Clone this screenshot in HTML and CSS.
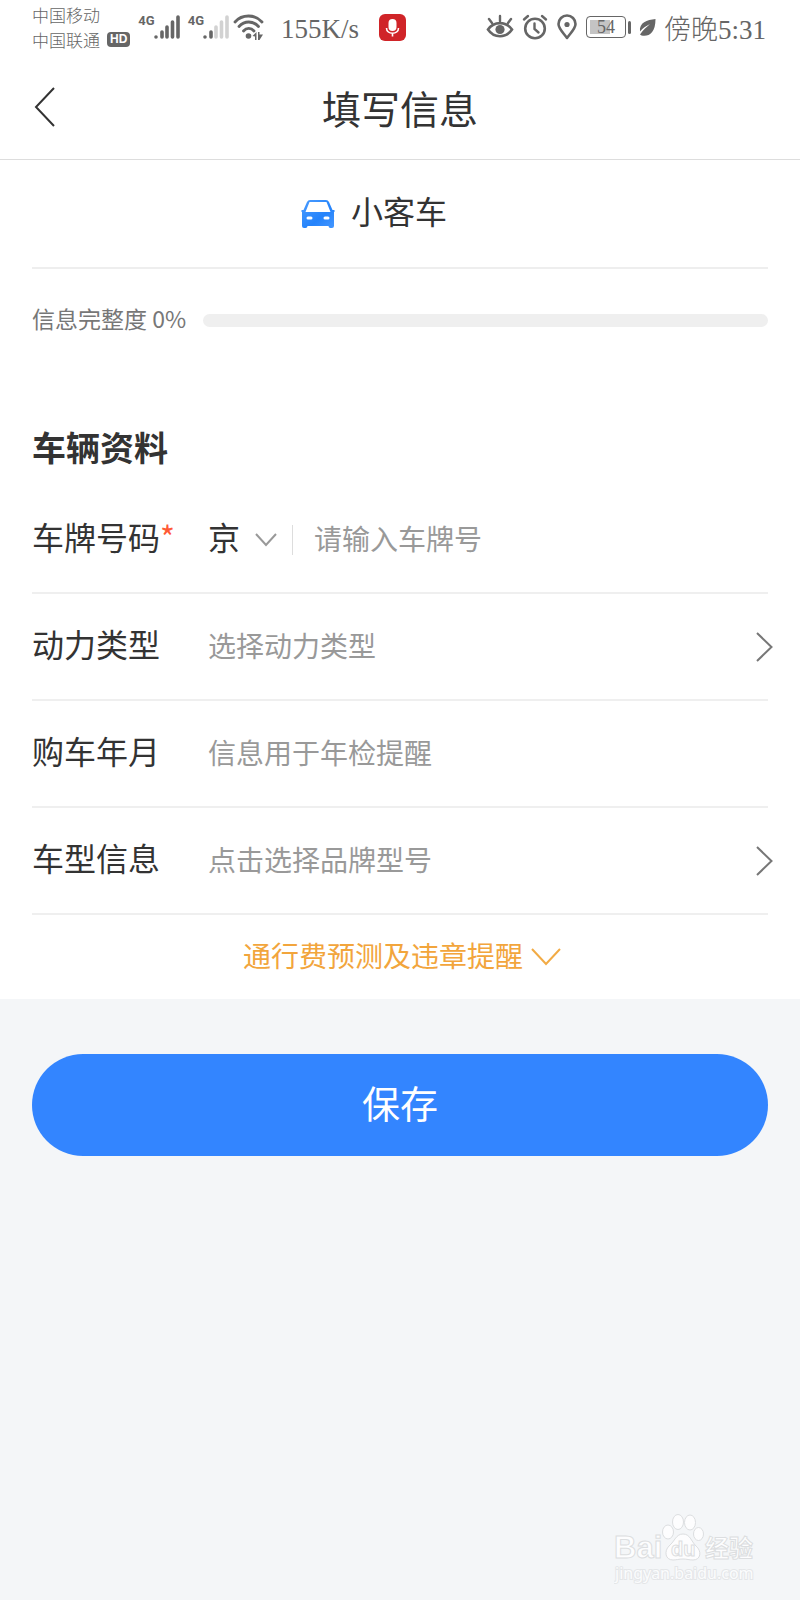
FILE: index.html
```html
<!DOCTYPE html>
<html lang="zh-CN">
<head>
    <meta charset="UTF-8">
    <meta name="viewport" content="width=device-width, initial-scale=1.0">
    <title>填写信息</title>
    <link rel="stylesheet" href="styles.css">
</head>
<body>
    <div class="status-bar">
        <div class="carriers">
            <div>中国移动</div>
            <div class="carrier-line">中国联通 <span class="hd">HD</span></div>
        </div>
        <div class="signal">
            <span class="net">4G</span>
            <svg width="27" height="26" viewBox="0 0 27 26" stroke-width="3.600" stroke-linecap="round">
                <path d="M3 23v0M9 18v5M14 13v10M19.500 8v15M25 3v20" stroke="#666"/>
            </svg>
        </div>
        <div class="signal">
            <span class="net">4G</span>
            <svg width="27" height="26" viewBox="0 0 27 26" stroke-width="3.600" stroke-linecap="round">
                <path d="M3 23v0M9 18v5" stroke="#666"/>
                <path d="M14 13v10M19.500 8v15M25 3v20" stroke="#d2d2d2"/>
            </svg>
        </div>
        <svg class="wifi" width="32" height="26" viewBox="0 0 32 26" fill="none" stroke="#666" stroke-width="2.800" stroke-linecap="round">
            <path d="M2 8C9 0 22 0 29 8M6 12.500C11.500 6.500 20 6.500 25.500 12.500M10.500 17c3-3.500 7.500-3.500 10.500 0"/>
            <circle cx="15.500" cy="22" r="2.800" fill="#666" stroke="none"/>
            <path d="M19.500 22l4-4v8h-1.500v-3.500zM25 18h1.500v2.500h3.500l-3.500 5.500h-1.500z" fill="#666" stroke="none"/>
        </svg>
        <span class="speed">155K/s</span>
        <svg class="mic" width="27" height="27" viewBox="0 0 27 27">
            <rect width="27" height="27" rx="6" fill="#d02428"/>
            <rect x="9.500" y="5" width="8" height="12" rx="4" fill="#fff"/>
            <path d="M7.500 14c0 7 12 7 12 0M13.500 19v3.500" fill="none" stroke="#fff" stroke-width="1.600"/>
        </svg>
        <div class="status-right">
            <svg width="28" height="26" viewBox="0 0 28 26" fill="none" stroke="#666" stroke-width="2.600" stroke-linecap="round">
                <path d="M2 15.500C8 7 20 7 26 15.500 20 24.500 8 24.500 2 15.500z"/>
                <circle cx="14" cy="15.500" r="4.600" fill="#666" stroke="none"/>
                <path d="M14 2v5M3 5l3 4M25 5l-3 4" stroke-width="2.400"/>
            </svg>
            <svg width="26" height="26" viewBox="0 0 26 26" fill="none" stroke="#666" stroke-width="2.600" stroke-linecap="round">
                <circle cx="13" cy="14.500" r="9.800"/>
                <path d="M12.500 9.500v5.500l4 3.500M2 5.500l4-3.500M24 5.500l-4-3.500" stroke-width="2.400"/>
            </svg>
            <svg width="22" height="26" viewBox="0 0 22 26" fill="none" stroke="#666" stroke-width="2.600" stroke-linejoin="round">
                <path d="M11 24C7 18.500 2.500 14.500 2.500 10a8.500 8.500 0 0 1 17 0c0 4.500-4.500 8.500-8.500 14z"/>
                <circle cx="11" cy="10.500" r="2.600" fill="#666" stroke="none"/>
            </svg>
            <div class="battery"><span class="battery-body">54</span><span class="battery-cap"></span></div>
            <svg width="17" height="19" viewBox="0 0 17 19">
                <path d="M16.500 1C8 2 0 4.500 1 13.500c3-4 6.500-5.500 10-7.500C8 9 4 11.500 1 16.500l1.500 1c7 1.500 14-2 14-16.500z" fill="#666"/>
            </svg>
            <span class="time">傍晚5:31</span>
        </div>
    </div>

    <header class="header">
        <button class="back" type="button" aria-label="返回">
            <svg width="22" height="42" viewBox="0 0 22 42" fill="none" stroke="#333" stroke-width="2">
                <path d="M20 2L2 21l18 19"/>
            </svg>
        </button>
        <h1 class="title">填写信息</h1>
    </header>

    <main>
        <form class="form" id="carForm">
            <div class="car-type">
                <svg width="34" height="28" viewBox="0 0 34 28">
                    <defs>
                        <linearGradient id="carFill" x1="0" y1="0" x2="1" y2="1">
                            <stop offset="0" stop-color="#4c9dff"/>
                            <stop offset="0.600" stop-color="#2483fb"/>
                            <stop offset="1" stop-color="#4597ff"/>
                        </linearGradient>
                    </defs>
                    <path fill="url(#carFill)" fill-rule="evenodd" d="M9 0h16q2 0 3 2l3.500 8h2v2H33v14q0 2-2 2h-1.500q-2 0-2-2h-21q0 2-2 2H3q-2 0-2-2V12H.500v-2h2L6 2q1-2 3-2zM8.500 2L4.500 12h25L25.500 2z"/>
                    <rect x="5.500" y="16.500" width="6" height="3" rx="1.500" fill="#fff"/>
                    <rect x="22.500" y="16.500" width="6" height="3" rx="1.500" fill="#fff"/>
                </svg>
                <span class="car-name">小客车</span>
            </div>

            <div class="completion">
                <label for="completion">信息完整度 0%</label>
                <progress id="completion" value="0" max="100"></progress>
            </div>

            <h2 class="section-title">车辆资料</h2>

            <div class="row">
                <label class="label" for="plate">车牌号码<span class="required">*</span></label>
                <div class="province">
                    <select aria-label="省份">
                        <option>京</option>
                        <option>沪</option>
                        <option>粤</option>
                    </select>
                    <svg width="22" height="14" viewBox="0 0 22 14" fill="none" stroke="#999" stroke-width="2">
                        <path d="M1 1l10 11L21 1"/>
                    </svg>
                </div>
                <input class="field" id="plate" type="text" placeholder="请输入车牌号">
            </div>
            <div class="row">
                <label class="label" for="power">动力类型</label>
                <button class="picker" id="power" type="button">
                    <span class="field">选择动力类型</span>
                    <svg width="17" height="30" viewBox="0 0 17 30" fill="none" stroke="#777" stroke-width="2">
                        <path d="M1 1l14.500 14L1 29"/>
                    </svg>
                </button>
            </div>
            <div class="row">
                <label class="label" for="buyDate">购车年月</label>
                <input class="field" id="buyDate" type="text" placeholder="信息用于年检提醒">
            </div>
            <div class="row">
                <label class="label" for="model">车型信息</label>
                <button class="picker" id="model" type="button">
                    <span class="field">点击选择品牌型号</span>
                    <svg width="17" height="30" viewBox="0 0 17 30" fill="none" stroke="#777" stroke-width="2">
                        <path d="M1 1l14.500 14L1 29"/>
                    </svg>
                </button>
            </div>

            <button class="more" type="button">
                <span>通行费预测及违章提醒</span>
                <svg width="30" height="18" viewBox="0 0 30 18" fill="none" stroke="#f2ab45" stroke-width="2">
                    <path d="M1 1l14 15L29 1"/>
                </svg>
            </button>
        </form>

        <div class="actions">
            <button class="save" type="submit" form="carForm">保存</button>
        </div>
    </main>

    <svg class="watermark" width="146" height="76" viewBox="0 0 146 76">
        <g fill="#fdfdfe" stroke="#dcdee0">
            <ellipse cx="54" cy="24" rx="5.500" ry="7"/>
            <ellipse cx="64" cy="14" rx="5.500" ry="7.500"/>
            <ellipse cx="76" cy="14.500" rx="5.500" ry="7.500"/>
            <ellipse cx="84.500" cy="26" rx="5" ry="6.500"/>
            <path d="M69 26c7 0 8 7 13 12 6 5 5 14-3 14-4 0-6-1-10-1s-7 1-10 1c-8 0-9-9-4-14 6-5 7-12 14-12z"/>
            <text class="wm-name" x="0" y="50">Bai</text>
            <text class="wm-du" x="57" y="48">du</text>
            <text class="wm-cn" x="91" y="49">经验</text>
        </g>
        <text class="wm-url" x="1" y="71">jingyan.baidu.com</text>
    </svg>
</body>
</html>
```
FILE: styles.css
```css
* {
    margin: 0;
    padding: 0;
    box-sizing: border-box;
}

body {
    position: relative;
    min-height: 100vh;
    background: #f4f6f8;
    color: #333;
    font-family: "Noto Sans CJK SC", sans-serif;
}

button,
input,
select {
    border: none;
    background: none;
    color: inherit;
    font: inherit;
    outline: none;
}

svg {
    flex-shrink: 0;
}

/* 状态栏 */
.status-bar {
    display: flex;
    align-items: center;
    height: 54px;
    padding: 0 34px 0 32px;
    background: #fff;
    color: #666;
    white-space: nowrap;
}

.carriers {
    font-size: 17px;
    font-weight: 300;
    line-height: 25px;
}

.carrier-line {
    display: flex;
    align-items: center;
    gap: 7px;
}

.hd {
    padding: 0 3px;
    border-radius: 4px;
    background: #666;
    color: #fff;
    font: bold 12px/15px "Liberation Sans", sans-serif;
}

.signal {
    display: flex;
    align-items: flex-start;
    margin-left: 8px;
}

.signal svg {
    margin-left: -2px;
}

.net {
    font: bold 13px/14px Roboto, sans-serif;
}

.wifi {
    margin-left: 4px;
}

.speed,
.time {
    font-family: "Liberation Serif", "Noto Sans CJK SC", serif;
    font-size: 27px;
    font-weight: 300;
}

.speed {
    padding-top: 4px;
    margin-left: 16px;
}

.mic {
    margin-left: 20px;
}

.status-right {
    display: flex;
    align-items: center;
    gap: 8px;
    margin-left: auto;
}

.battery {
    display: flex;
    align-items: center;
    gap: 2px;
}

.battery-body {
    width: 40px;
    height: 22px;
    border: 1px solid #666;
    border-radius: 4px;
    background: linear-gradient(to right, #c4c4c4 60%, #fff 60%);
    box-shadow: inset 0 0 0 3px #fff;
    font: 18px/21px "Liberation Serif", serif;
    text-align: center;
}

.battery-cap {
    width: 3px;
    height: 13px;
    border-radius: 2px;
    background: #666;
}

/* 标题栏 */
.header {
    display: grid;
    grid-template-columns: 1fr auto 1fr;
    align-items: center;
    height: 106px;
    padding: 0 32px;
    border-bottom: 1px solid #ddd;
    background: #fff;
}

.back {
    display: flex;
    justify-self: start;
    padding: 2px;
}

.title {
    font-size: 39px;
    font-weight: 400;
}

/* 表单 */
.form {
    padding: 0 32px;
    background: #fff;
}

.car-type {
    display: flex;
    align-items: center;
    justify-content: center;
    gap: 16px;
    height: 109px;
    padding-right: 52px;
    border-bottom: 2px solid #eee;
    font-size: 32px;
}

.car-name {
    padding-bottom: 8px;
}

.completion {
    display: flex;
    align-items: center;
    gap: 17px;
    height: 102px;
    color: #777;
    font-size: 23px;
}

.completion label {
    padding-bottom: 4px;
}

progress {
    flex: 1;
    height: 13px;
    border-radius: 8px;
    overflow: hidden;
    appearance: none;
}

progress::-webkit-progress-bar {
    background: #efefef;
}

progress::-webkit-progress-value {
    background: #3385ff;
}

.section-title {
    padding: 51px 0 15px;
    font-size: 34px;
    font-weight: 700;
    line-height: 50px;
}

.row {
    display: flex;
    align-items: center;
    height: 107px;
    border-bottom: 2px solid #efefef;
}

.label {
    flex: 0 0 176px;
    padding-bottom: 8px;
    font-size: 32px;
}

.required {
    color: #ff5a36;
}

.field {
    flex: 1;
    min-width: 0;
    padding-bottom: 4px;
    color: #999;
    font-size: 28px;
    text-align: left;
}

.field::placeholder {
    color: #999;
    opacity: 1;
}

.picker {
    display: flex;
    flex: 1;
    align-items: center;
    margin-right: -5px;
}

.province {
    position: relative;
    display: flex;
    align-items: center;
    height: 30px;
    margin-right: 21px;
    padding-right: 15px;
    border-right: 1px solid #ddd;
}

.province select {
    width: 69px;
    padding-bottom: 8px;
    font-size: 32px;
    appearance: none;
}

.province svg {
    position: absolute;
    right: 15px;
    pointer-events: none;
}

.more {
    display: flex;
    align-items: center;
    justify-content: center;
    gap: 8px;
    width: 100%;
    height: 84px;
    padding-left: 4px;
    color: #f2a53c;
    font-size: 28px;
}

.more span {
    padding-bottom: 4px;
}

.actions {
    padding: 55px 32px;
}

.save {
    width: 100%;
    height: 102px;
    padding-bottom: 8px;
    border-radius: 51px;
    background: #3385ff;
    color: #fff;
    font-size: 38px;
}

/* 水印 */
.watermark {
    position: absolute;
    right: 40px;
    bottom: 16px;
}

.wm-name,
.wm-du {
    font-family: "Liberation Sans", sans-serif;
    font-weight: bold;
}

.wm-name {
    font-size: 31px;
}

.wm-du {
    font-size: 20px;
}

.wm-cn {
    font-size: 24px;
    font-weight: bold;
}

.wm-url {
    fill: #fbfcfd;
    stroke: #e4e6e8;
    stroke-width: 2px;
    paint-order: stroke;
    font-family: "Noto Sans", sans-serif;
    font-size: 16px;
}
```
